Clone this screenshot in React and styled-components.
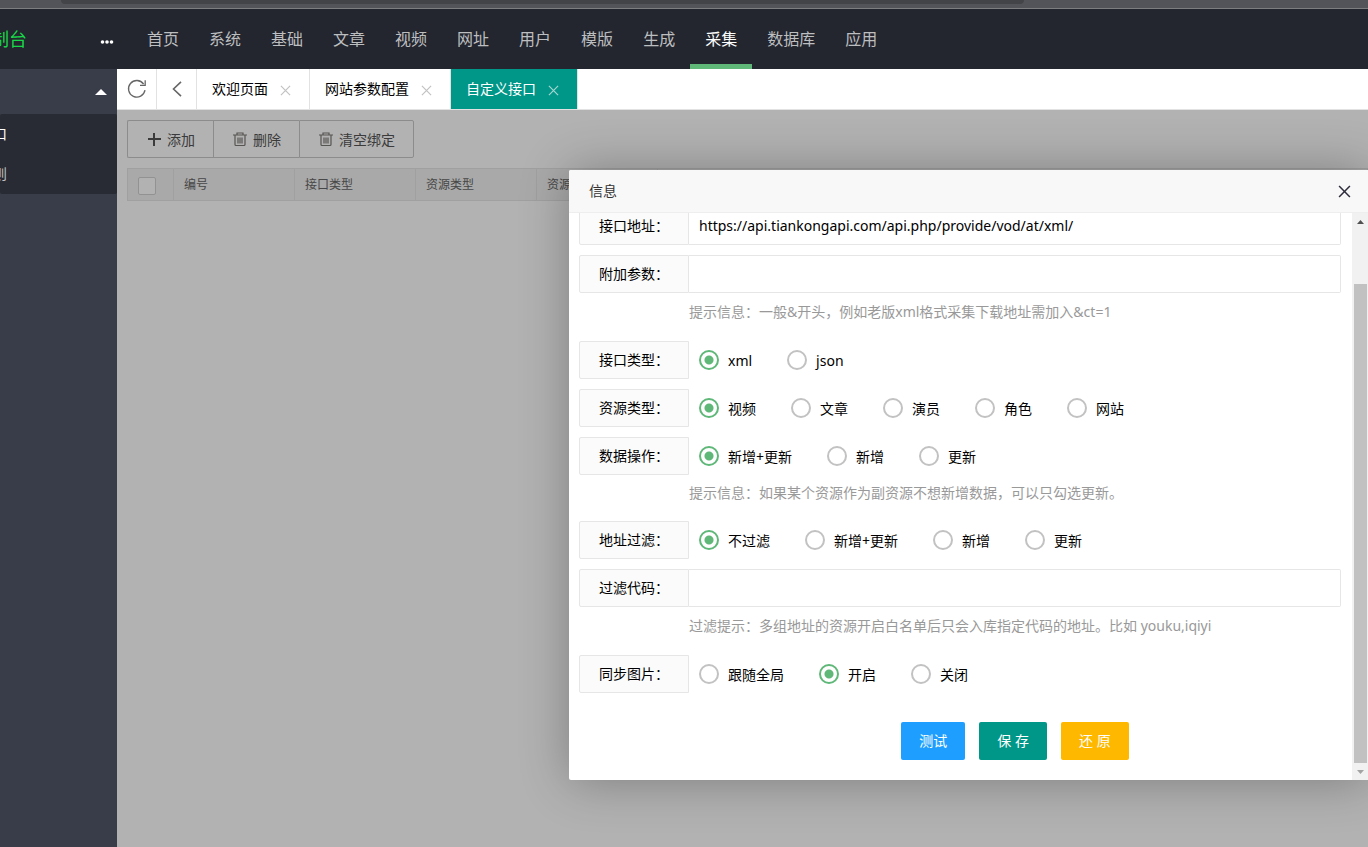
import React, { useState } from 'react';

import styled, { createGlobalStyle, css } from 'styled-components';


const GlobalStyle = createGlobalStyle`
    *{
        box-sizing:border-box;
    }
    body{
        margin:0;
        background:#fff;
    }
    body, button, input, table{
        font-family:"Noto Sans", "Noto Sans CJK SC", sans-serif;
        font-size:14px;
        line-height:24px;
        color:#000;
    }
`;

const plainButton = css`
    padding:0;
    border:0;
    background:none;
    cursor:pointer;
`;

/* Page frame */
const Page = styled.div`
    display:flex;
    flex-direction:column;
    min-height:100vh;
    overflow:hidden;
`;
const Strip = styled.div`
    height:9px;
    padding:0 344px 0 61px;
    background:#53545a;
    border-bottom:1px solid #7d7e80;
`;
const StripField = styled.div`
    height:4px;
    background:#434447;
    border-radius:0 0 4px 4px;
`;
const Header = styled.header`
    display:flex;
    align-items:center;
    height:60px;
    background:#23262e;
`;
const Brand = styled.div`
    display:flex;
    justify-content:flex-end;
    width:27px;
    overflow:hidden;
    white-space:nowrap;
    font-size:18px;
    color:#18d849;
`;
const MoreButton = styled.button`
    ${plainButton}
    display:flex;
    justify-content:flex-end;
    align-items:flex-end;
    width:87px;
    height:16px;
    padding-bottom:3px;
    margin-right:18px;
`;
const Menu = styled.nav`
    display:flex;
`;
const MenuLink = styled.a`
    height:60px;
    padding:0 15px;
    font-size:16px;
    line-height:60px;
    text-decoration:none;
    color:${props => props.$active ? '#fff' : '#bdbec0'};
    box-shadow:${props => props.$active ? 'inset 0 -5px #5fb878' : 'none'};
`;
const Body = styled.div`
    flex:1;
    display:flex;
`;

/* Sidebar */
const Sidebar = styled.aside`
    flex:none;
    width:117px;
    background:#393d49;
`;
const SideToggle = styled.button`
    ${plainButton}
    display:flex;
    align-items:center;
    justify-content:flex-end;
    width:100%;
    height:45px;
    padding-right:10px;
`;
const SideGroup = styled.div`
    background:#282b33;
    border-radius:2px;
`;
const SideLink = styled.a`
    display:flex;
    justify-content:flex-end;
    width:7px;
    overflow:hidden;
    line-height:40px;
    text-decoration:none;
    color:${props => props.$active ? '#fff' : '#bebfc2'};
`;

/* Tabs */
const Main = styled.main`
    flex:1;
    display:flex;
    flex-direction:column;
    min-width:0;
`;
const TabBar = styled.div`
    display:flex;
    height:41px;
    background:#fff;
    border-bottom:1px solid #e2e2e2;
`;
const TabTool = styled.button`
    ${plainButton}
    display:flex;
    align-items:center;
    justify-content:center;
    width:40px;
    border-right:1px solid #e2e2e2;
`;
const Tab = styled.div`
    display:flex;
    align-items:center;
    gap:8px;
    padding:0 15px;
    border-right:1px solid #e2e2e2;
    background:${props => props.$active ? '#009688' : '#fff'};
    color:${props => props.$active ? '#fff' : '#000'};
`;
const TabClose = styled.button`
    ${plainButton}
    display:flex;
    align-items:center;
    justify-content:center;
    width:18px;
    height:20px;
    padding-top:2px;
    color:${props => props.$active ? '#a5d6d1' : '#c2c2c2'};
`;

/* Content */
const Content = styled.section`
    flex:1;
    position:relative;
    overflow:hidden;
    padding:10px 0 0 10px;
`;
const ButtonGroup = styled.div`
    display:flex;
    margin-bottom:10px;
`;
const ToolButton = styled.button`
    display:flex;
    align-items:center;
    gap:5px;
    height:38px;
    padding:2px 18px 0;
    border:1px solid #c9c9c9;
    border-right-width:0;
    background:#fff;
    color:#555;
    cursor:pointer;
    &:first-child{
        border-radius:2px 0 0 2px;
    }
    &:last-child{
        border-right-width:1px;
        border-radius:0 2px 2px 0;
    }
`;
const DataTable = styled.table`
    width:100%;
    border-collapse:collapse;
    table-layout:fixed;
    background:#f2f2f2;
`;
const HeadCell = styled.th`
    width:${props => props.$width};
    height:32px;
    padding:0 10px;
    border:1px solid #e6e6e6;
    font-size:12px;
    font-weight:400;
    line-height:24px;
    text-align:left;
    color:#666;
`;
const CheckAll = styled.input`
    appearance:none;
    display:block;
    width:18px;
    height:18px;
    margin:3px 0 0;
    border:1px solid #d2d2d2;
    border-radius:2px;
    background:#fff;
`;
const Shade = styled.div`
    position:absolute;
    inset:0;
    background:rgba(0, 0, 0, .3);
`;

/* Dialog */
const Dialog = styled.section`
    position:absolute;
    top:60px;
    right:-1px;
    width:800px;
    height:610px;
    display:flex;
    flex-direction:column;
    background:#fff;
    border-radius:2px;
    box-shadow:1px 1px 50px rgba(0, 0, 0, .3);
`;
const DialogHead = styled.div`
    display:flex;
    flex:none;
    align-items:center;
    justify-content:space-between;
    height:43px;
    padding:0 18px 0 20px;
    background:#f8f8f8;
    border-bottom:1px solid #eee;
    border-radius:2px 2px 0 0;
`;
const DialogTitle = styled.h2`
    margin:0;
    font-size:14px;
    font-weight:400;
    color:#333;
`;
const DialogClose = styled.button`
    ${plainButton}
    display:flex;
    color:#2e2d3c;
`;
const DialogBody = styled.div`
    flex:1;
    display:flex;
    min-height:0;
`;
/* Form is scrolled to its end */
const Form = styled.form`
    flex:1;
    display:flex;
    flex-direction:column;
    justify-content:flex-end;
    overflow:hidden;
    padding:0 11px 20px 10px;
`;
const Row = styled.div`
    display:flex;
    flex:none;
    height:38px;
    margin-bottom:10px;
    &:has(+ p){
        margin-bottom:0;
    }
`;
const RowLabel = styled.label`
    flex:none;
    width:110px;
    border:1px solid #e6e6e6;
    border-radius:2px 0 0 2px;
    background:#fbfbfb;
    line-height:36px;
    text-align:center;
`;
const TextInput = styled.input`
    flex:1;
    min-width:0;
    padding:0 10px;
    border:1px solid #e6e6e6;
    border-left:0;
    border-radius:0 2px 2px 0;
    background:#fff;
    outline:0;
`;
const Hint = styled.p`
    flex:none;
    margin:0 0 10px 110px;
    line-height:${props => props.$short ? '36px' : '38px'};
    color:#999;
`;
const RadioList = styled.div`
    display:flex;
    align-items:center;
    gap:35px;
    padding-left:10px;
`;
const RadioLabel = styled.label`
    display:flex;
    align-items:center;
    gap:9px;
    white-space:nowrap;
`;
const RadioText = styled.span`
    padding-top:2px;
`;
const RadioInput = styled.input`
    appearance:none;
    width:20px;
    height:20px;
    margin:0;
    border:2px solid #c2c2c2;
    border-radius:50%;
    &:checked{
        border-color:#5fb878;
        background:radial-gradient(circle, #5fb878 4px, transparent 5px);
    }
`;
const Actions = styled.div`
    display:flex;
    flex:none;
    justify-content:center;
    gap:14px;
    margin:19px 0 0 110px;
`;
const ActionButton = styled.button`
    height:38px;
    padding:0 18px;
    border:0;
    border-radius:2px;
    background:${props => props.$color};
    color:#fff;
    cursor:pointer;
`;
const ScrollTrack = styled.div`
    display:flex;
    flex-direction:column;
    align-items:center;
    flex:none;
    width:17px;
    background:#f1f1f1;
`;
const ScrollArrow = styled.span`
    display:flex;
    align-items:center;
    justify-content:center;
    height:17px;
    color:${props => props.$dim ? '#a3a3a3' : '#505050'};
`;
const ScrollThumb = styled.span`
    flex:1;
    width:13px;
    margin-top:54px;
    background:#c1c1c1;
`;

const CrossIcon = ({size, weight = 1}) => (
    <svg width={size} height={size} viewBox="0 0 12 12" fill="none" stroke="currentColor" strokeWidth={weight}>
        <path d="M1 1l10 10M11 1L1 11"/>
    </svg>
);

const RefreshIcon = () => (
    <svg width="20" height="20" viewBox="0 0 20 20" fill="none" stroke="#666" strokeWidth="1.3">
        <path d="M18 11.2A8.3 8.3 0 1 1 16.6 5M18.2 1.2v5.2h-5.2"/>
    </svg>
);

const BackIcon = () => (
    <svg width="20" height="20" viewBox="0 0 20 20" fill="none" stroke="#666" strokeWidth="1.6">
        <path d="M14 2.8L6.5 10l7.5 7.2"/>
    </svg>
);

const PlusIcon = () => (
    <svg width="16" height="16" viewBox="0 0 16 16" fill="none" stroke="currentColor" strokeWidth="2">
        <path d="M8 1v13M2 7h13"/>
    </svg>
);

const TrashIcon = () => (
    <svg width="16" height="16" viewBox="0 0 16 16" fill="none" stroke="#7d7a76" strokeWidth="1.2">
        <path d="M1 3h14M5 2.8V1h6v1.8M3 3.2v9.3q0 1 1 1h8q1 0 1-1V3.2"/>
        <path d="M6 5.5v6M8 5.5v6M10 5.5v6"/>
    </svg>
);

const Triangle = ({width, height, down}) => (
    <svg width={width} height={height} viewBox="0 0 12 6" preserveAspectRatio="none" fill="currentColor">
        <path d={down ? 'M0 0h12L6 6z' : 'M0 6h12L6 0z'}/>
    </svg>
);

const menu = ['首页', '系统', '基础', '文章', '视频', '网址', '用户', '模版', '生成', '采集', '数据库', '应用'];
const tabs = ['欢迎页面', '网站参数配置', '自定义接口'];
const columns = ['编号', '接口类型', '资源类型', '资源'];

const TextRow = ({id, label, value}) => (
    <Row>
        <RowLabel htmlFor={id}>{label}：</RowLabel>
        <TextInput id={id} type="text" defaultValue={value}/>
    </Row>
);

const RadioRow = ({name, label, options, initial = 0}) => {
    const [picked, setPicked] = useState(initial);
    return (
        <Row role="radiogroup" aria-labelledby={`${name}-label`}>
            <RowLabel as="span" id={`${name}-label`}>{label}：</RowLabel>
            <RadioList>
                {options.map((option, i) => (
                    <RadioLabel key={option}>
                        <RadioInput type="radio" name={name} checked={picked === i} onChange={() => setPicked(i)}/>
                        <RadioText>{option}</RadioText>
                    </RadioLabel>
                ))}
            </RadioList>
        </Row>
    );
};

const InfoDialog = () => (
    <Dialog role="dialog" aria-labelledby="dialog-title">
        <DialogHead>
            <DialogTitle id="dialog-title">信息</DialogTitle>
            <DialogClose type="button" aria-label="关闭"><CrossIcon size={13} weight={1.4}/></DialogClose>
        </DialogHead>
        <DialogBody>
            <Form onSubmit={e => e.preventDefault()}>
                <TextRow id="url" label="接口地址" value="https://api.tiankongapi.com/api.php/provide/vod/at/xml/"/>
                <TextRow id="param" label="附加参数"/>
                <Hint>提示信息：一般&amp;开头，例如老版xml格式采集下载地址需加入&amp;ct=1</Hint>
                <RadioRow name="type" label="接口类型" options={['xml', 'json']}/>
                <RadioRow name="mid" label="资源类型" options={['视频', '文章', '演员', '角色', '网站']}/>
                <RadioRow name="opt" label="数据操作" options={['新增+更新', '新增', '更新']}/>
                <Hint $short>提示信息：如果某个资源作为副资源不想新增数据，可以只勾选更新。</Hint>
                <RadioRow name="filter" label="地址过滤" options={['不过滤', '新增+更新', '新增', '更新']}/>
                <TextRow id="code" label="过滤代码"/>
                <Hint>过滤提示：多组地址的资源开启白名单后只会入库指定代码的地址。比如 youku,iqiyi</Hint>
                <RadioRow name="pic" label="同步图片" options={['跟随全局', '开启', '关闭']} initial={1}/>
                <Actions>
                    <ActionButton type="button" $color="#1e9fff">测试</ActionButton>
                    <ActionButton type="submit" $color="#009688">保 存</ActionButton>
                    <ActionButton type="reset" $color="#ffb800">还 原</ActionButton>
                </Actions>
            </Form>
            <ScrollTrack>
                <ScrollArrow><Triangle width={7} height={4}/></ScrollArrow>
                <ScrollThumb/>
                <ScrollArrow $dim><Triangle width={7} height={4} down/></ScrollArrow>
            </ScrollTrack>
        </DialogBody>
    </Dialog>
);

const App = () => (
    <Page>
        <GlobalStyle/>
        <Strip><StripField/></Strip>
        <Header>
            <Brand>制台</Brand>
            <MoreButton type="button" aria-label="更多">
                <svg width="14" height="4" viewBox="0 0 14 4" fill="#fff">
                    <circle cx="2.5" cy="2" r="1.8"/>
                    <circle cx="7" cy="2" r="1.8"/>
                    <circle cx="11.5" cy="2" r="1.8"/>
                </svg>
            </MoreButton>
            <Menu>
                {menu.map(item => (
                    <MenuLink key={item} href="#" $active={item === '采集'}>{item}</MenuLink>
                ))}
            </Menu>
        </Header>
        <Body>
            <Sidebar>
                <SideToggle type="button" aria-label="采集"><svg width="12" height="6" viewBox="0 0 12 6" fill="#fff"><path d="M0 6h12L6 0z"/></svg></SideToggle>
                <SideGroup>
                    <SideLink href="#" $active>口</SideLink>
                    <SideLink href="#">则</SideLink>
                </SideGroup>
            </Sidebar>
            <Main>
                <TabBar>
                    <TabTool type="button" aria-label="刷新"><RefreshIcon/></TabTool>
                    <TabTool type="button" aria-label="向左"><BackIcon/></TabTool>
                    {tabs.map(tab => (
                        <Tab key={tab} $active={tab === '自定义接口'}>
                            {tab}
                            <TabClose type="button" aria-label="关闭" $active={tab === '自定义接口'}><CrossIcon size={11} weight={1.3}/></TabClose>
                        </Tab>
                    ))}
                </TabBar>
                <Content>
                    <ButtonGroup>
                        <ToolButton type="button"><PlusIcon/>添加</ToolButton>
                        <ToolButton type="button"><TrashIcon/>删除</ToolButton>
                        <ToolButton type="button"><TrashIcon/>清空绑定</ToolButton>
                    </ButtonGroup>
                    <DataTable>
                        <thead>
                            <tr>
                                <HeadCell $width="46px"><CheckAll type="checkbox" aria-label="全选"/></HeadCell>
                                {columns.map(col => <HeadCell key={col} $width="121px">{col}</HeadCell>)}
                                <HeadCell aria-label="操作"/>
                            </tr>
                        </thead>
                    </DataTable>
                    <Shade/>
                    <InfoDialog/>
                </Content>
            </Main>
        </Body>
    </Page>
);

export default App;
